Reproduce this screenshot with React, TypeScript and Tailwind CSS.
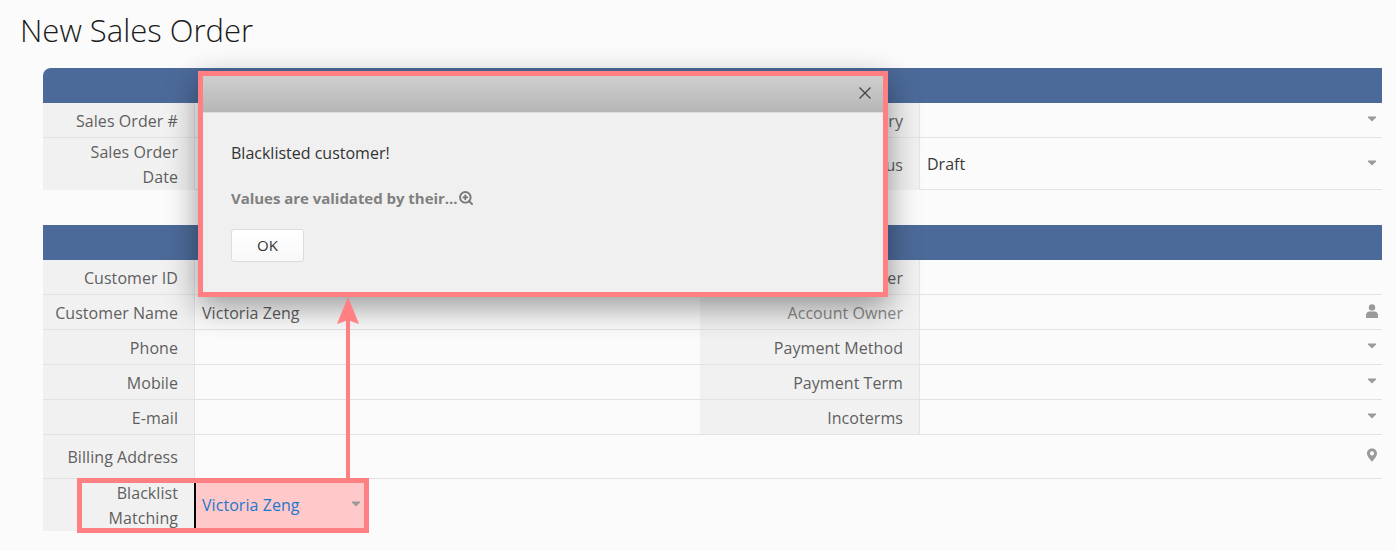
import { ZoomIn } from "lucide-react";

const labelCell =
  "flex items-center justify-end bg-[#f1f1f1] border-r border-[#e4e4e4] pr-4 pt-[2px] text-right leading-[25px] tracking-[0.06px] text-[#5f5f5f]";

function Caret() {
  return (
    <svg width="12" height="6" viewBox="0 0 12 6" className="mb-[3px] shrink-0">
      <path d="M2 .5h8v1L6 5.500L2 1.500z" fill="#9a9a9a" />
    </svg>
  );
}

function Person() {
  return (
    <svg width="12" height="14" viewBox="0 0 12 14" className="mb-[2px] shrink-0">
      <circle cx="6" cy="3.400" r="3.200" fill="#9a9a9a" />
      <path d="M0 14v-3.200C0 8.800 1.700 7.500 3.500 7.500h5c1.800 0 3.500 1.300 3.500 3.300V14z" fill="#9a9a9a" />
    </svg>
  );
}

function Pin() {
  return (
    <svg width="12" height="14" viewBox="0 0 12 14" className="mb-[3px] shrink-0">
      <path
        fillRule="evenodd"
        d="M6 .5C3.200.5 1 2.600 1 5.300c0 2.900 2.900 6.100 5 8.500 2.100-2.400 5-5.600 5-8.500C11 2.600 8.800.5 6 .5zm0 2.800a2.100 2.100 0 1 1 0 4.200 2.100 2.100 0 0 1 0-4.200z"
        fill="#9a9a9a"
      />
    </svg>
  );
}

type RowProps = {
  height: string;
  label: React.ReactNode;
  value?: string;
  right: string;
  rightMuted?: boolean;
  rightValue?: string;
  icon?: React.ReactNode;
};

function Row({ height, label, value, right, rightMuted, rightValue, icon }: RowProps) {
  return (
    <div className={`grid grid-cols-[152px_505px_220px_1fr] border-b border-[#e2e2e2] ${height}`}>
      <div className={labelCell}>{label}</div>
      <div className="flex items-center pl-[7px] pt-[2px] tracking-[0.06px] text-[#5f5f5f]">{value}</div>
      <div className={`${labelCell} ${rightMuted ? "text-[#888]" : ""}`}>{right}</div>
      <div className="flex items-center justify-between pl-[7px] pr-[4px] text-[#3a3a3a]">
        <span>{rightValue}</span>
        {icon}
      </div>
    </div>
  );
}

function SectionHeader({ rounded }: { rounded?: boolean }) {
  return <div className={`h-[35px] bg-[#4c6a99] ${rounded ? "rounded-tl-lg" : ""}`} />;
}

export default function App() {
  return (
    <div className="relative h-[551px] w-[1396px] overflow-hidden bg-[#fbfbfb] font-['Open_Sans',sans-serif] text-base">
      <h1 className="pl-5 pt-[9px] text-[31px] leading-[42px] font-[350] text-[#1a1a1a]">New Sales Order</h1>

      <div className="ml-[43px] mr-[14px] mt-[17px]">
        <SectionHeader rounded />
        <Row height="h-[35px]" label="Sales Order #" right="Sales Category" icon={<Caret />} />
        <Row
          height="h-[52px]"
          label={
            <span>
              Sales Order
              <br />
              Date
            </span>
          }
          right="Order Status"
          rightValue="Draft"
          icon={<Caret />}
        />

        <div className="h-[35px]" />

        <SectionHeader />
        <Row height="h-[35px]" label="Customer ID" right="Customer Order Number" />
        <Row height="h-[35px]" label="Customer Name" value="Victoria Zeng" right="Account Owner" rightMuted icon={<Person />} />
        <Row height="h-[35px]" label="Phone" right="Payment Method" icon={<Caret />} />
        <Row height="h-[35px]" label="Mobile" right="Payment Term" icon={<Caret />} />
        <Row height="h-[35px]" label="E-mail" right="Incoterms" icon={<Caret />} />
        <div className="grid h-[44px] grid-cols-[152px_1fr] border-b border-[#e2e2e2]">
          <div className={labelCell}>Billing Address</div>
          <div className="flex items-center justify-end pr-[4px]">
            <Pin />
          </div>
        </div>

        {/* blacklist field stops short of the full row */}
        <div className="grid h-[52px] w-[322px] grid-cols-[152px_1fr] border-b border-[#e2e2e2]">
          <div className={labelCell}>
            <span>
              Blacklist
              <br />
              Matching
            </span>
          </div>
          <div className="flex items-center justify-between bg-[#ffc9c9] pl-[7px] pr-[3px] tracking-[0.06px] text-[#1c78d0]">
            <span>Victoria Zeng</span>
            <Caret />
          </div>
        </div>
      </div>

      {/* black cursor line in the blacklist field */}
      <div className="absolute left-[194px] top-[483px] h-[45px] w-[2px] bg-black" />

      {/* annotation around the field */}
      <div className="absolute left-[77px] top-[478px] h-[55px] w-[292px] border-[5px] border-[#ff7f83]" />

      {/* dialog */}
      <div className="absolute left-[198px] top-[71px] h-[226px] w-[690px] border-[5px] border-[#ff7f83] bg-[#f0f0f0] shadow-[0_10px_30px_rgba(0,0,0,0.4)]">
        <div className="flex h-[37px] items-center justify-end border-b border-[#dedede] bg-gradient-to-b from-[#cfcfcf] to-[#b6b6b6] pb-[2px] pr-[12px]">
          <svg width="12" height="12" viewBox="0 0 12 12">
            <path d="M.5.5l11 11M11.500.5l-11 11" stroke="#444" strokeWidth="1.300" fill="none" />
          </svg>
        </div>
        <div className="pl-[28px]">
          <p className="pt-[28px] text-[16px] leading-[24px] text-[#333]">Blacklisted customer!</p>
          <p className="mt-[21px] flex items-center text-[15px] leading-[24px] font-bold tracking-[-0.03px] text-[#808080]">
            Values are validated by their...
            <ZoomIn size={16} strokeWidth={2.8} className="text-[#777]" />
          </p>
          <button className="mt-[19px] h-[33px] w-[73px] rounded-[3px] border border-[#dcdcdc] bg-gradient-to-b from-white to-[#f8f8f8] text-[15px] text-[#333]">
            OK
          </button>
        </div>
      </div>

      {/* arrow from the field to the dialog */}
      <svg width="24" height="182" viewBox="0 0 24 182" className="absolute left-[336px] top-[297px]">
        <rect x="10" y="20" width="4" height="162" fill="#ff7f83" />
        <path d="M12 0L23 27L12 23L1 27z" fill="#ff7f83" />
      </svg>
    </div>
  );
}
